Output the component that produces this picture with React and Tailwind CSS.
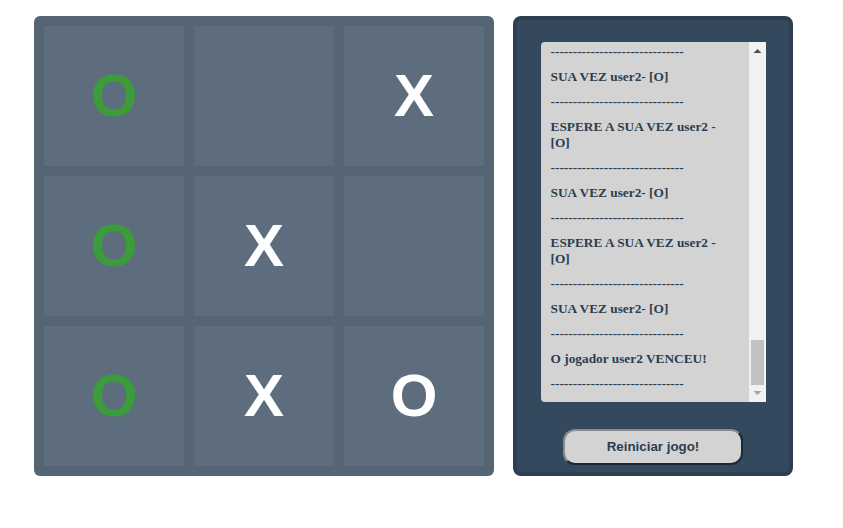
import { useEffect, useRef } from 'react'

const board = ['O', '', 'X', 'O', 'X', '', 'O', 'X', 'O']
const green = [0, 3, 6]

const dash = '------------------------------'

function buildLog() {
  const log = []
  for (let i = 0; i < 20; i++) {
    log.push(dash)
    log.push(i % 2 === 0 ? 'SUA VEZ user2- [O]' : 'ESPERE A SUA VEZ user2 - [O]')
  }
  log.push(dash)
  log.push('SUA VEZ user2- [O]')
  log.push(dash)
  log.push('O jogador user2 VENCEU!')
  log.push(dash)
  return log
}

function Scrollbar() {
  return (
    <div className="w-[17px] h-full bg-[#f1f1f1] flex flex-col items-center shrink-0">
      <svg width="17" height="17" viewBox="0 0 17 17" className="shrink-0">
        <path d="M4.5 11 L8.5 7 L12.5 11 Z" fill="#505050" />
      </svg>
      <div className="flex-1 w-full flex flex-col justify-end px-[2px]">
        <div className="h-[45px] w-full bg-[#c1c1c1]" />
      </div>
      <svg width="17" height="17" viewBox="0 0 17 17" className="shrink-0">
        <path d="M4.5 6 L8.5 10 L12.5 6 Z" fill="#a3a3a3" />
      </svg>
    </div>
  )
}

export default function App() {
  const logRef = useRef(null)
  const log = buildLog()

  useEffect(() => {
    if (logRef.current) logRef.current.scrollTop = logRef.current.scrollHeight
  }, [])

  return (
    <div className="w-[843px] h-[528px] bg-white flex items-start gap-[19px] pl-[34px] pt-[16px]">
      <div className="w-[460px] h-[460px] bg-[#566573] rounded-[6px] p-[10px] grid grid-cols-3 gap-[10px]">
        {board.map((v, i) => (
          <div
            key={i}
            className={`bg-[#5d6d7e] flex items-center justify-center text-[60px] font-bold leading-none ${
              green.includes(i) ? 'text-[#3a9d3a]' : 'text-white'
            }`}
            style={{ fontFamily: '"Liberation Sans", Arial, sans-serif' }}
          >
            {v}
          </div>
        ))}
      </div>

      <div className="w-[280px] h-[460px] bg-[#34495e] border-4 border-[#2c3e50] rounded-[8px] flex flex-col items-center pt-[22px]">
        <div className="w-[225px] h-[360px] bg-[#d3d3d3] rounded-l-[4px] flex overflow-hidden">
          <div
            ref={logRef}
            className="flex-1 h-full overflow-hidden pl-[10px] pr-[20px] pb-[1px] text-[13.33px] leading-[16px] font-bold text-[#2c3e50]"
            style={{ fontFamily: '"Liberation Serif", "Times New Roman", serif' }}
          >
            {log.map((line, i) => (
              <p key={i} className="my-[9px]">
                {line}
              </p>
            ))}
          </div>
          <Scrollbar />
        </div>
        <button
          className="mt-[27px] w-[180px] h-[36px] bg-[#d3d3d3] border-2 border-t-[#8a8a8a] border-l-[#8a8a8a] border-b-[#1c2833] border-r-[#1c2833] rounded-[12px] text-[13.33px] font-bold text-[#2c3e50]"
          style={{ fontFamily: '"Liberation Sans", Arial, sans-serif' }}
        >
          Reiniciar jogo!
        </button>
      </div>
    </div>
  )
}
